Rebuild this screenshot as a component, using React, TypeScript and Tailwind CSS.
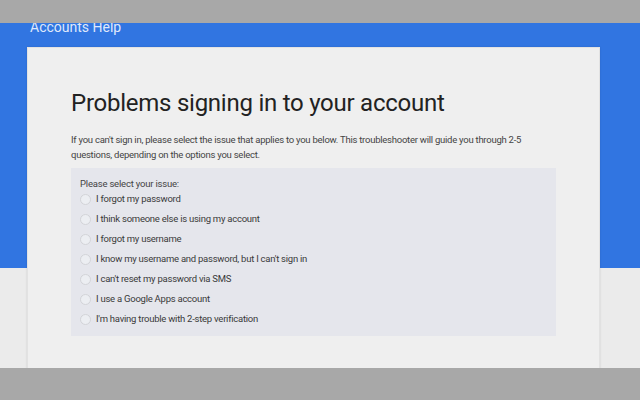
const ISSUES = [
  "I forgot my password",
  "I think someone else is using my account",
  "I forgot my username",
  "I know my username and password, but I can't sign in",
  "I can't reset my password via SMS",
  "I use a Google Apps account",
  "I'm having trouble with 2-step verification",
];

export default function App() {
  return (
    <div className="w-[640px] h-[400px] overflow-hidden bg-[#a8a8a8] font-['Roboto','Liberation_Sans',sans-serif]">
      <div className="h-[23px] bg-[#a8a8a8]" />
      <div className="h-[345px] overflow-hidden px-[27px] bg-[linear-gradient(to_bottom,#3175e1_245px,#ebebeb_245px)]">
        <div className="-mt-[4px] pl-[3px] h-[16px] text-[14px] leading-[16px] text-[#dfe8fb]">Accounts Help</div>
        <div className="mt-[12px] w-[573px] h-[360px] bg-[#efefef] border border-[#e2e2e2] shadow-[0_0_2px_rgba(0,0,0,0.12)] pl-[43px] pt-[40px]">
          <h1 className="text-[24px] leading-[30px] tracking-[-0.25px] font-normal text-[#222]">Problems signing in to your account</h1>
          <p className="mt-[14px] w-[470px] text-[9.5px] leading-[15px] tracking-[-0.25px] text-[#444]">
            If you can't sign in, please select the issue that applies to you below. This troubleshooter will guide you through 2-5 questions, depending on the options you select.
          </p>
          <div className="mt-[6px] w-[485px] h-[168px] bg-[#e5e6ec] pl-[9px] pt-[9px]">
            <div className="text-[9.5px] leading-[14px] tracking-[-0.2px] text-[#444]">Please select your issue:</div>
            <div className="-mt-[2px] flex flex-col">
              {ISSUES.map((t) => (
                <label key={t} className="flex items-center gap-[5px] h-[20px] text-[9.5px] tracking-[-0.25px] text-[#3a3a3a]">
                  <span className="w-[11px] h-[11px] rounded-full border border-[#d3d4d8] bg-[#eceef2]" />
                  {t}
                </label>
              ))}
            </div>
          </div>
        </div>
      </div>
      <div className="h-[32px] bg-[#a8a8a8]" />
    </div>
  );
}
